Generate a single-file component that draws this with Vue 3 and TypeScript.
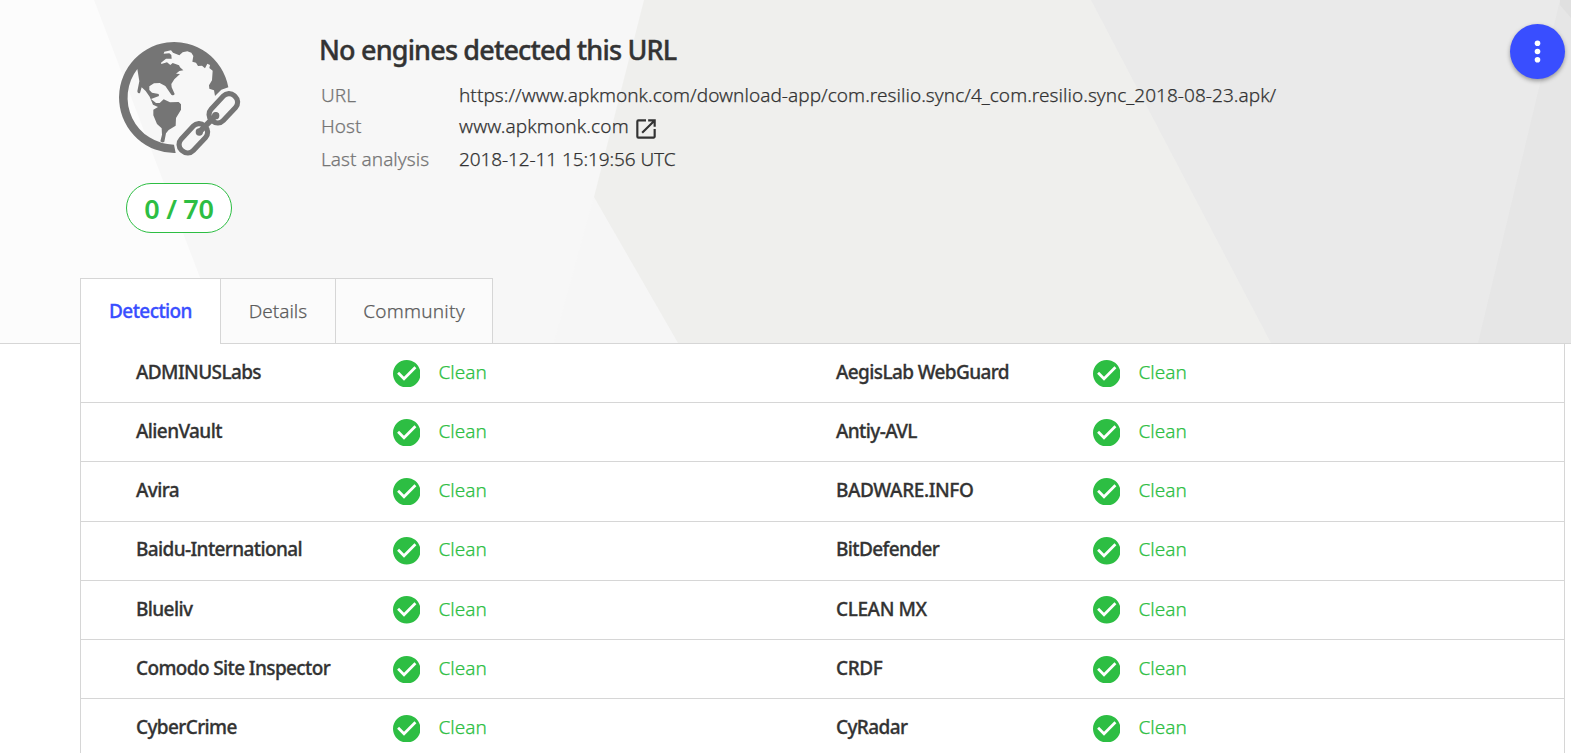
<script setup lang="ts">
interface Engine {
  name: string
  verdict: string
}

const tabs: string[] = ['Detection', 'Details', 'Community']

const rows: Engine[][] = [
  ['ADMINUSLabs', 'AegisLab WebGuard'],
  ['AlienVault', 'Antiy-AVL'],
  ['Avira', 'BADWARE.INFO'],
  ['Baidu-International', 'BitDefender'],
  ['Blueliv', 'CLEAN MX'],
  ['Comodo Site Inspector', 'CRDF'],
  ['CyberCrime', 'CyRadar'],
].map((pair) => pair.map((name) => ({ name, verdict: 'Clean' })))

const isUpper = (text: string): boolean => text === text.toUpperCase()
</script>

<template>
  <div class="page">
    <header class="hero">
      <svg class="backdrop" viewBox="0 0 1571 343" preserveAspectRatio="none" aria-hidden="true">
        <rect width="1571" height="343" fill="#fcfcfc" />
        <path d="M94 0H1571V343H225Z" fill="#f7f7f7" />
        <path d="M594 197L554 343H700Z" fill="#f6f6f6" />
        <path d="M644 0L594 197L678 343H1571V0Z" fill="#efefed" />
        <path d="M1091 0L1271 343H1571V0Z" fill="#eaeaea" />
        <path d="M1560 0L1478 343H1571V0Z" fill="#e6e6e6" />
        <path d="M1560 0V5L1571 18V0Z" fill="#e0e0e0" />
      </svg>

      <div class="summary">
        <div class="score">
          <svg class="globe" viewBox="0 0 480 420" aria-hidden="true">
            <path
              fill="#757575"
              d="M385 172A165.300 166.500 0 1 0 227 369L222 344A141 141 0 0 1 112 117L118 154L112 184Q113 192 120 189L125 172L137 183L149 200L159 224L174 231L160 239L160 256L171 282L185 295L186 314L181 334Q187 340 193 335L198 310L206 300L227 287L228 264L243 239L243 223L236 216L210 217L191 208L179 219L168 219L153 207L177 198L176 192L156 188L148 180L148 169L162 160L179 159L196 168L214 194Q221 198 224 192L215 172L214 162L223 148L240 132L228 131L238 123L250 121L240 112L237 106L218 99L211 105L201 97L184 102L183 98L198 86L215 86L214 75L208 70L191 71L193 65L213 61L219 68L238 76L248 67L262 64L274 68L280 78L277 95L288 98L294 108L306 107L315 115L322 101L330 105L328 114L338 122L336 151L327 166L328 176L342 181L345 198L364 179Z"
            />
            <g fill="none" stroke="#757575" stroke-width="15.500">
              <rect x="-50" y="-25" width="100" height="50" rx="23" transform="translate(370 235) rotate(-47)" />
              <rect x="-50" y="-25" width="100" height="50" rx="23" transform="translate(280 325) rotate(-47)" />
              <path d="M298 306L348 256" stroke-width="17" stroke-linecap="round" />
            </g>
            <circle cx="298" cy="306" r="11" fill="#757575" />
            <circle cx="347" cy="257" r="11" fill="#757575" />
          </svg>
          <div class="ratio"><span>0 / 70</span></div>
        </div>

        <div class="info">
          <h1>No engines detected this URL</h1>
          <dl>
            <dt>URL</dt>
            <dd><span class="url">https://www.apkmonk.com/download-app/com.resilio.sync/4_com.resilio.sync_2018-08-23.apk/</span></dd>
            <dt>Host</dt>
            <dd class="host">
              <span>www.apkmonk.com</span>
              <svg class="open" viewBox="0 0 24 24" aria-hidden="true">
                <path fill="#333" d="M19 19H5V5h7V3H5a2 2 0 0 0-2 2v14a2 2 0 0 0 2 2h14c1.100 0 2-.9 2-2v-7h-2v7zM14 3v2h3.590l-9.830 9.830 1.410 1.410L19 6.410V10h2V3h-7z" />
              </svg>
            </dd>
            <dt class="last">Last analysis</dt>
            <dd class="date">2018-12-11 15:19:56 UTC</dd>
          </dl>
        </div>

        <button class="menu" type="button" aria-label="Menu">
          <svg viewBox="0 0 55 55" aria-hidden="true">
            <circle cx="27.500" cy="19.300" r="2.800" fill="#fff" />
            <circle cx="27.500" cy="27.500" r="2.800" fill="#fff" />
            <circle cx="27.500" cy="35.800" r="2.800" fill="#fff" />
          </svg>
        </button>
      </div>

      <nav class="tabs">
        <a v-for="(tab, i) in tabs" :key="tab" class="tab" :class="{ active: i === 0 }"><span>{{ tab }}</span></a>
      </nav>
    </header>

    <main class="panel">
      <div v-for="(row, r) in rows" :key="r" class="row">
        <div v-for="engine in row" :key="engine.name" class="cell">
          <span class="name" :class="{ upper: isUpper(engine.name) }">{{ engine.name }}</span>
          <svg class="check" viewBox="2 2 20 20" aria-hidden="true">
            <path fill="#2dbe43" d="M12 2C6.480 2 2 6.480 2 12s4.480 10 10 10 10-4.480 10-10S17.520 2 12 2zm-2 15l-5-5 1.410-1.410L10 14.170l7.590-7.590L19 8l-9 9z" />
          </svg>
          <span class="verdict">{{ engine.verdict }}</span>
        </div>
      </div>
    </main>
  </div>
</template>

<style>
body {
  margin: 0;
  overflow: hidden;
}
</style>

<style scoped>
.page {
  width: 1571px;
  height: 753px;
  overflow: hidden;
  background: #fff;
  color: #333;
  font-family: "Noto Sans", "Open Sans", sans-serif;
  font-size: 19px;
  font-weight: 300;
  -webkit-text-stroke: 0.25px currentColor;
}
.hero {
  position: relative;
  box-sizing: border-box;
  height: 344px;
  border-bottom: 1px solid #d6d6d6;
  display: flex;
  flex-direction: column;
  justify-content: space-between;
}
.backdrop {
  position: absolute;
  inset: 0;
  width: 100%;
  height: 343px;
}
.summary {
  position: relative;
  display: flex;
  align-items: flex-start;
}
.score {
  width: 160px;
  margin: 30px 60px 0 100px;
  display: flex;
  flex-direction: column;
  align-items: center;
}
.globe {
  display: block;
  width: 160px;
  height: 140px;
}
.ratio {
  box-sizing: border-box;
  width: 106px;
  height: 50px;
  margin: 13px 2px 0 0;
  border: 1px solid #2dbe43;
  border-radius: 25px;
  background: #fff;
  color: #2dbe43;
  text-align: center;
  line-height: 50px;
  font-size: 27px;
  font-weight: 600;
  letter-spacing: -0.3px;
  -webkit-text-stroke: 0;
}
.info {
  flex: 1;
}
h1 {
  margin: 32px 0 11px -1px;
  font-size: 27px;
  line-height: 36px;
  font-weight: 500;
  -webkit-text-stroke: 0.4px #333;
  letter-spacing: -0.83px;
  white-space: nowrap;
}
dl {
  margin: 0;
  display: grid;
  grid-template-columns: 139px 1fr;
  grid-template-rows: 31px 33px 32px;
  line-height: 32px;
  white-space: nowrap;
}
dt {
  color: #757575;
  padding-left: 1px;
  letter-spacing: 0.05px;
}
dd {
  margin: 0;
}
.url {
  letter-spacing: 0.05px;
}
.host {
  display: flex;
  letter-spacing: 0.15px;
}
.date {
  letter-spacing: -0.09px;
}
.open {
  width: 26px;
  height: 26px;
  margin: 5.500px 0 0 4.500px;
}
.menu {
  width: 55px;
  height: 55px;
  margin: 24px 6px 0 0;
  padding: 0;
  border: 0;
  border-radius: 50%;
  background: #394eff;
  box-shadow: 0 2px 4px rgba(0, 0, 0, 0.35);
}
.menu svg {
  display: block;
}
.tabs {
  position: relative;
  display: flex;
  margin: 0 0 -1px 80px;
}
.tab {
  box-sizing: border-box;
  height: 66px;
  width: 115px;
  border: 1px solid #d6d6d6;
  border-left: 0;
  background: #fbfbfb;
  color: #5c5c5c;
  text-align: center;
  line-height: 64px;
}
.tab:last-child {
  width: 157px;
  letter-spacing: 0.25px;
}
.tab.active {
  width: 141px;
  border-left: 1px solid #d6d6d6;
  border-bottom: 0;
  background: #fff;
  color: #394eff;
  font-weight: 500;
  -webkit-text-stroke: 0.3px #394eff;
  letter-spacing: -0.6px;
  line-height: 65px;
}
.panel {
  box-sizing: border-box;
  width: 1485px;
  margin-left: 80px;
  border: 1px solid #d6d6d6;
  border-width: 0 1px;
}
.row {
  box-sizing: border-box;
  height: 59.2px;
  border-bottom: 1px solid #d6d6d6;
  display: flex;
  padding-left: 55px;
}
.cell {
  width: 700px;
  display: flex;
  align-items: center;
  line-height: 56px;
  white-space: nowrap;
}
.name {
  width: 256.500px;
  padding-bottom: 2.600px;
  font-weight: 500;
  -webkit-text-stroke: 0.3px #333;
  letter-spacing: -0.62px;
}
.name.upper {
  letter-spacing: -0.4px;
}
.check {
  width: 27.500px;
  height: 27.500px;
  margin: 0.500px 18.500px 0 0;
}
.verdict {
  padding-bottom: 2.600px;
  color: #2dbe43;
}
</style>
